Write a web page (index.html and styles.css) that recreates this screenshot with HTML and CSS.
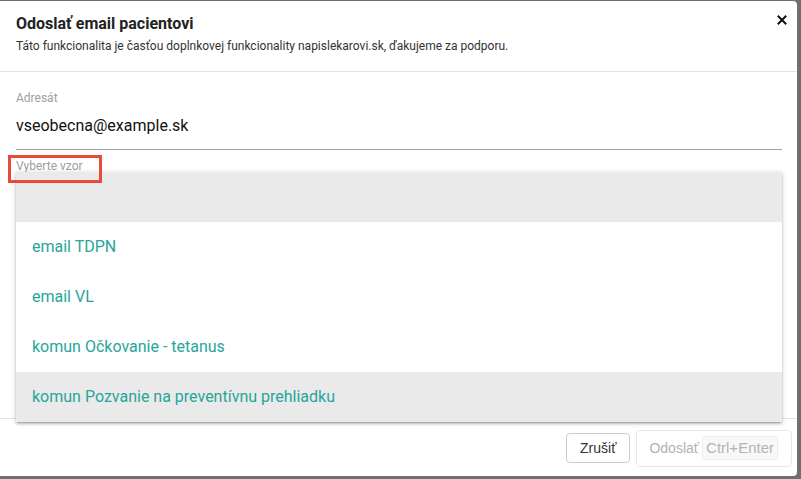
FILE: index.html
```html
<!DOCTYPE html>
<html lang="sk">
<head>
<meta charset="utf-8">
<title>Odoslať email pacientovi</title>
<link rel="stylesheet" href="styles.css">
</head>
<body>
<div class="modal">
  <div class="modal-header">
    <div class="titles">
      <h4 class="title">Odoslať email pacientovi</h4>
      <p class="subtitle">Táto funkcionalita je časťou doplnkovej funkcionality napislekarovi.sk, ďakujeme za podporu.</p>
    </div>
    <button class="close" aria-label="Zavrieť">
      <svg width="10" height="10" viewBox="0 0 10 10"><path d="M1.5 1.5L8.5 8.5M8.5 1.5L1.5 8.5" stroke="#111" stroke-width="2" stroke-linecap="square"/></svg>
    </button>
  </div>
  <div class="modal-body">
    <div class="field">
      <label class="label">Adresát</label>
      <div class="input">vseobecna@example.sk</div>
    </div>
    <div class="field select-field">
      <label class="label label-marked">Vyberte vzor</label>
      <ul class="dropdown">
        <li class="opt opt-active"></li>
        <li class="opt">email TDPN</li>
        <li class="opt">email VL</li>
        <li class="opt">komun Očkovanie - tetanus</li>
        <li class="opt opt-active">komun Pozvanie na preventívnu prehliadku</li>
      </ul>
    </div>
  </div>
  <div class="modal-footer">
    <button class="btn">Zrušiť</button>
    <button class="btn btn-disabled"><span>Odoslať</span><span class="kbd">Ctrl+Enter</span></button>
  </div>
</div>
</body>
</html>
```

FILE: styles.css
```css
html, body {
  margin: 0;
  padding: 0;
  height: 100%;
}
body {
  background: #6f6f6f;
  font-family: Roboto, "Liberation Sans", Arial, sans-serif;
  overflow: hidden;
}
.modal {
  margin: 1px 0 0 0;
  width: 797px;
  height: 475px;
  background: #fff;
  border-radius: 0 4px 4px 0;
  display: flex;
  flex-direction: column;
  box-sizing: border-box;
}
.modal-header {
  display: flex;
  justify-content: space-between;
  align-items: flex-start;
  padding: 13px 5px 17px 16px;
  border-bottom: 1px solid #e5e5e5;
}
.title {
  margin: 0;
  font-size: 16px;
  line-height: 20px;
  font-weight: 700;
  color: #222;
}
.subtitle {
  margin: 4px 0 0 0;
  font-size: 12px;
  line-height: 16px;
  color: #333;
}
.close {
  border: 0;
  background: transparent;
  padding: 0;
  margin-top: -4px;
  width: 20px;
  height: 20px;
  display: flex;
  align-items: center;
  justify-content: center;
  cursor: pointer;
}
.modal-body {
  flex: 1;
  padding: 18px 15px 0 16px;
  position: relative;
}
.field {
  position: relative;
}
.label {
  display: block;
  font-size: 12px;
  line-height: 16px;
  color: #9e9e9e;
}
.input {
  height: 43px;
  line-height: 40px;
  font-size: 16px;
  color: #111;
  border-bottom: 1px solid #9e9e9e;
}
.select-field {
  margin-top: 8px;
}
.label-marked {
  position: relative;
}
.label-marked::after {
  content: "";
  position: absolute;
  left: -8px;
  top: -3px;
  width: 88px;
  height: 22px;
  border: 3px solid #ea4a3b;
  z-index: 3;
}
.dropdown {
  position: absolute;
  top: 14px;
  left: 0;
  right: 0;
  margin: 0;
  padding: 0;
  list-style: none;
  background: #fff;
  z-index: 2;
  box-shadow: 0 2px 2px 0 rgba(0,0,0,0.14), 0 3px 1px -2px rgba(0,0,0,0.12), 0 1px 5px 0 rgba(0,0,0,0.2);
}
.opt {
  height: 50px;
  line-height: 50px;
  padding: 0 16px;
  font-size: 16px;
  color: #26a69a;
}
.opt-active {
  background: #eaeaea;
}
.modal-footer {
  border-top: 1px solid #e5e5e5;
  height: 56px;
  display: flex;
  justify-content: flex-end;
  align-items: center;
  gap: 6px;
  padding: 1px 5px 0 0;
}
.btn {
  font-family: "Liberation Sans", Arial, sans-serif;
  font-size: 14px;
  background: #fff;
  color: #333;
  border: 1px solid #ccc;
  border-radius: 4px;
  height: 30px;
  padding: 0 13px;
  display: flex;
  align-items: center;
}
.btn-disabled {
  color: #b3b3b3;
  border-color: #e8e8e8;
  height: 37px;
  padding: 0 13px 0 12px;
  gap: 3px;
}
.kbd {
  display: inline-block;
  background: #f8f8f8;
  border: 1px solid #eee;
  border-radius: 3px;
  padding: 0 3px;
  height: 22px;
  line-height: 22px;
  font-size: 15px;
}
```
